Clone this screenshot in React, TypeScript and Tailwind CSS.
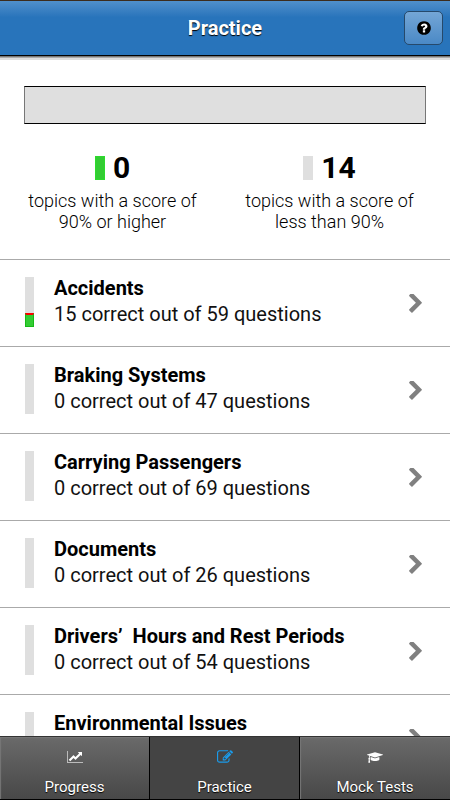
import React from 'react';

interface Topic {
  name: string;
  correct: number;
  total?: number;
}

interface IconProps {
  className?: string;
}

const topics: Topic[] = [
  { name: 'Accidents', correct: 15, total: 59 },
  { name: 'Braking Systems', correct: 0, total: 47 },
  { name: 'Carrying Passengers', correct: 0, total: 69 },
  { name: 'Documents', correct: 0, total: 26 },
  { name: 'Drivers’  Hours and Rest Periods', correct: 0, total: 54 },
  { name: 'Environmental Issues', correct: 0 },
];

const HelpIcon: React.FC<IconProps> = ({ className }) => (
  <svg viewBox="0 0 1792 1792" className={className} aria-hidden="true">
    <circle cx="896" cy="896" r="700" fill="white" />
    <path fill="currentColor" d="M1024 1376v-192q0-14-9-23t-23-9h-192q-14 0-23 9t-9 23v192q0 14 9 23t23 9h192q14 0 23-9t9-23zm256-672q0-88-55.5-163t-138.5-116-170-41q-243 0-371 213-15 24 8 42l132 100q7 6 19 6 16 0 25-12 53-68 86-92 34-24 86-24 48 0 85.5 26t37.5 59q0 38-20 61t-68 45q-63 28-115.5 86.5t-52.5 125.5v36q0 14 9 23t23 9h192q14 0 23-9t9-23q0-19 21.5-49.5t54.5-49.5q32-18 49-28.5t46-35 44.5-48 28-60.5 12.5-81zm384 192q0 209-103 385.5t-279.5 279.5-385.5 103-385.5-103-279.5-279.5-103-385.5 103-385.5 279.5-279.5 385.5-103 385.5 103 279.5 279.5 103 385.5z" />
  </svg>
);

const ChevronIcon: React.FC<IconProps> = ({ className }) => (
  <svg viewBox="346 128 1036 1536" className={className} aria-hidden="true">
    <path fill="currentColor" d="M1363 877l-742 742q-19 19-45 19t-45-19l-166-166q-19-19-19-45t19-45l531-531-531-531q-19-19-19-45t19-45l166-166q19-19 45-19t45 19l742 742q19 19 19 45t-19 45z" />
  </svg>
);

const ChartIcon: React.FC<IconProps> = ({ className }) => (
  <svg viewBox="0 0 2048 1792" className={className} aria-hidden="true">
    <path fill="#bbb" d="M2048 1536v128h-2048v-1536h128v1408h1920z" />
    <path fill="currentColor" d="M1920 288v435q0 21-19.5 29.5t-35.5-7.5l-121-121-633 633q-10 10-23 10t-23-10l-233-233-416 416-192-192 585-585q10-10 23-10t23 10l233 233 464-464-121-121q-16-16-7.5-35.5t29.5-19.5h435q14 0 23 9t9 23z" />
  </svg>
);

const EditIcon: React.FC<IconProps> = ({ className }) => (
  <svg viewBox="0 0 1792 1792" className={className} aria-hidden="true">
    <path fill="currentColor" d="M888 1184l116-116-152-152-116 116v56h96v96h56zm440-720q-16-16-33 1l-350 350q-17 17-1 33t33-1l350-350q17-17 1-33zm80 594v190q0 119-84.5 203.5t-203.5 84.5h-832q-119 0-203.5-84.5t-84.5-203.5v-832q0-119 84.5-203.5t203.5-84.5h832q63 0 117 25 15 7 18 23 3 17-9 29l-49 49q-14 14-32 8-23-6-45-6h-832q-66 0-113 47t-47 113v832q0 66 47 113t113 47h832q66 0 113-47t47-113v-126q0-13 9-22l64-64q15-15 35-7t20 29zm-96-738l288 288-672 672h-288v-288zm444 132l-92 92-288-288 92-92q28-28 68-28t68 28l152 152q28 28 28 68t-28 68z" />
  </svg>
);

const CapIcon: React.FC<IconProps> = ({ className }) => (
  <svg viewBox="0 0 2304 1792" className={className} aria-hidden="true">
    <path fill="currentColor" d="M1774 836l18 316q4 69-82 128t-235 93.5-323 34.5-323-34.5-235-93.5-82-128l18-316 574 181q22 7 48 7t48-7zm530-324q0 23-22 31l-1120 352q-4 1-10 1t-10-1l-652-206q-43 34-71 111.5t-34 178.5q63 36 63 109 0 69-58 107l58 433q2 14-8 25-9 11-24 11h-192q-15 0-24-11-10-11-8-25l58-433q-58-38-58-107 0-73 65-111 11-207 98-330l-333-104q-22-8-22-31t22-31l1120-352q4-1 10-1t10 1l1120 352q22 8 22 31z" />
  </svg>
);

const ScoreBar: React.FC<{ topic: Topic }> = ({ topic }) => {
  const percent = topic.total ? Math.round((topic.correct / topic.total) * 100) : 0;

  return (
    <div className="mb-[2px] flex h-[50px] w-[9px] shrink-0 flex-col justify-end bg-[#dfdfdf]">
      {percent > 0 && (
        <div
          className="border border-t-2 border-[#16b916] border-t-[#f00] bg-[#33cc33]"
          style={{ height: `${percent + 4}%` }}
        />
      )}
    </div>
  );
};

const TopicRow: React.FC<{ topic: Topic }> = ({ topic }) => (
  <li className="border-t border-[#aaa]">
    <button type="button" className="flex h-[86px] w-full items-center pr-[28px] pl-[25px] text-left">
      <ScoreBar topic={topic} />
      <div className="ml-5 h-14 flex-1 text-xl leading-[26px]">
        <div className="font-bold whitespace-pre">{topic.name}</div>
        {topic.total && (
          <div className="text-[#111]">
            {topic.correct} correct out of {topic.total} questions
          </div>
        )}
      </div>
      <ChevronIcon className="h-[19px] w-[13px] text-[#808080]" />
    </button>
  </li>
);

const Summary: React.FC<{ count: number; color: string; lines: string[] }> = ({ count, color, lines }) => (
  <div className="flex-1 text-center">
    <div className="flex items-center justify-center gap-2">
      <span className={`h-6 w-[10px] ${color}`} />
      <span className="text-3xl leading-8 font-bold">{count}</span>
    </div>
    <p className="mt-[6px] text-lg leading-[21px] font-light">
      {lines[0]}
      <br />
      {lines[1]}
    </p>
  </div>
);

const tabs = [
  { label: 'Progress', icon: <ChartIcon className="h-[14px] w-4" />, active: false },
  { label: 'Practice', icon: <EditIcon className="h-4 w-4 text-[#1a9bea]" />, active: true },
  { label: 'Mock Tests', icon: <CapIcon className="h-[13px] w-4" />, active: false },
];

export default function App() {
  return (
    <div className="flex h-screen flex-col bg-white font-[Roboto,sans-serif] text-black">
      <header className="relative z-10 grid h-14 shrink-0 grid-cols-[1fr_auto_1fr] items-center border-t border-b border-t-[#3c2c1c] border-b-black bg-linear-to-b from-[#5090cb] to-[#2874bb] to-30% px-[7px] shadow-[0_1px_0_#777,0_2px_0_#aaa,0_4px_0_#ddd]">
        <h1 className="col-start-2 text-xl font-bold text-white [text-shadow:0_1px_1px_#000]">Practice</h1>
        <button
          type="button"
          aria-label="Help"
          className="flex h-[34px] w-[39px] items-center justify-center justify-self-end rounded-[5px] border border-[#26496b] bg-linear-to-b from-[#74a6d6] to-[#4a89c6]"
        >
          <HelpIcon className="h-4 w-4 text-black" />
        </button>
      </header>

      <main className="min-h-0 flex-1 overflow-y-auto [scrollbar-width:none]">
        <div className="px-6 pt-[30px]">
          <div className="h-[38px] border border-x-[#777] border-y-black bg-[#dfdfdf]" />
        </div>
        <div className="flex pt-7 pr-3 pb-[27px] pl-1">
          <Summary count={0} color="border border-[#2cdb2c] bg-[#33cc33]" lines={['topics with a score of', '90% or higher']} />
          <Summary count={14} color="bg-[#dfdfdf]" lines={['topics with a score of', 'less than 90%']} />
        </div>
        <ul>
          {topics.map((topic) => (
            <TopicRow key={topic.name} topic={topic} />
          ))}
        </ul>
      </main>

      <nav className="grid h-16 shrink-0 grid-cols-3 divide-x divide-black border-t border-b border-t-[#333] border-b-black text-white">
        {tabs.map((tab) => (
          <button
            key={tab.label}
            type="button"
            className={`flex flex-col items-center justify-between pt-3 pb-[2px] [text-shadow:0_1px_1px_#000] ${
              tab.active ? 'bg-[#444]' : 'bg-linear-to-b from-[#6a6a6a] to-[#484848] shadow-[inset_1px_1px_1px_#777]'
            }`}
          >
            <span className="flex h-4 items-center">{tab.icon}</span>
            <span className="text-[15px] leading-5">{tab.label}</span>
          </button>
        ))}
      </nav>
    </div>
  );
}
